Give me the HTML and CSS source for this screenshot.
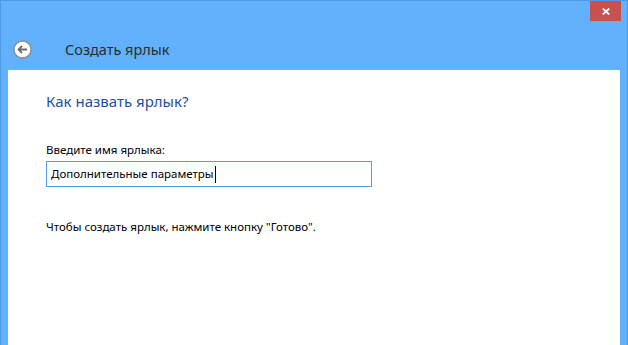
FILE: index.html
```html
<!DOCTYPE html>
<html lang="ru">
<head>
    <meta charset="UTF-8">
    <title>Создать ярлык</title>
    <link rel="stylesheet" href="styles.css">
</head>
<body>
    <div class="window">
        <div class="caption">
            <button class="close" title="Закрыть">
                <svg width="8" height="7" viewBox="0 0 8 7">
                    <path d="M0.8 0.5 L7.2 6.5 M7.2 0.5 L0.8 6.5" stroke="#fff" stroke-width="1.8" fill="none"/>
                </svg>
            </button>
        </div>

        <div class="nav">
            <button class="back" title="Назад">
                <svg width="19" height="19" viewBox="0 0 19 19">
                    <circle cx="9.5" cy="9.5" r="8.6" fill="#fff" stroke="#8c8c8c" stroke-width="1.5"/>
                    <path d="M14 9.5 H5.5 M9 6 L5.5 9.5 L9 13" stroke="#6e6e6e" stroke-width="1.8" fill="none"/>
                </svg>
            </button>
            <span class="nav-title">Создать ярлык</span>
        </div>

        <div class="panel">
            <h1>Как назвать ярлык?</h1>
            <label class="field-label">Введите имя ярлыка:</label>
            <div class="textbox">Дополнительные параметры<span class="caret"></span></div>
            <p class="hint">Чтобы создать ярлык, нажмите кнопку "Готово".</p>
        </div>
    </div>
</body>
</html>
```

FILE: styles.css
```css
html, body {
    margin: 0;
    padding: 0;
    background: #ffffff;
}
body {
    font-family: "Noto Sans", "Open Sans", sans-serif;
}
.window {
    width: 628px;
    height: 345px;
    box-sizing: border-box;
    background: #62b1fc;
    border: 1px solid #4f98e2;
    border-bottom: none;
    padding: 0 6px 0 7px;
    display: flex;
    flex-direction: column;
}
.caption {
    height: 20px;
    display: flex;
    justify-content: flex-end;
}
.close {
    width: 31px;
    height: 20px;
    border: none;
    padding: 0;
    background: #c75050;
    display: flex;
    align-items: center;
    justify-content: center;
}
.nav {
    height: 49px;
    box-sizing: border-box;
    padding: 8px 0 0 5px;
    display: flex;
    align-items: center;
}
.back {
    width: 19px;
    height: 19px;
    border: none;
    padding: 0;
    background: none;
    display: flex;
}
.nav-title {
    margin-left: 33px;
    font-size: 14.5px;
    color: #2b2b2b;
    margin-top: -2px;
}
.panel {
    flex: 1;
    background: #ffffff;
    margin-right: 1px;
    padding: 20px 0 0 38px;
}
h1 {
    margin: 0;
    font-size: 15px;
    line-height: 22px;
    font-weight: normal;
    color: #1f4fa3;
}
.field-label {
    display: block;
    margin-top: 30px;
    font-size: 11.5px;
    line-height: 16px;
    color: #000;
}
.textbox {
    margin-top: 3px;
    width: 326px;
    height: 26px;
    box-sizing: border-box;
    border: 1px solid #569de5;
    padding: 0 4px;
    font-size: 11.5px;
    line-height: 24px;
    color: #000;
    display: flex;
    align-items: center;
}
.caret {
    display: inline-block;
    width: 1px;
    height: 17px;
    background: #000;
    margin-left: 1px;
}
.hint {
    margin: 32px 0 0;
    font-size: 11.5px;
    line-height: 16px;
    color: #000;
}
```
